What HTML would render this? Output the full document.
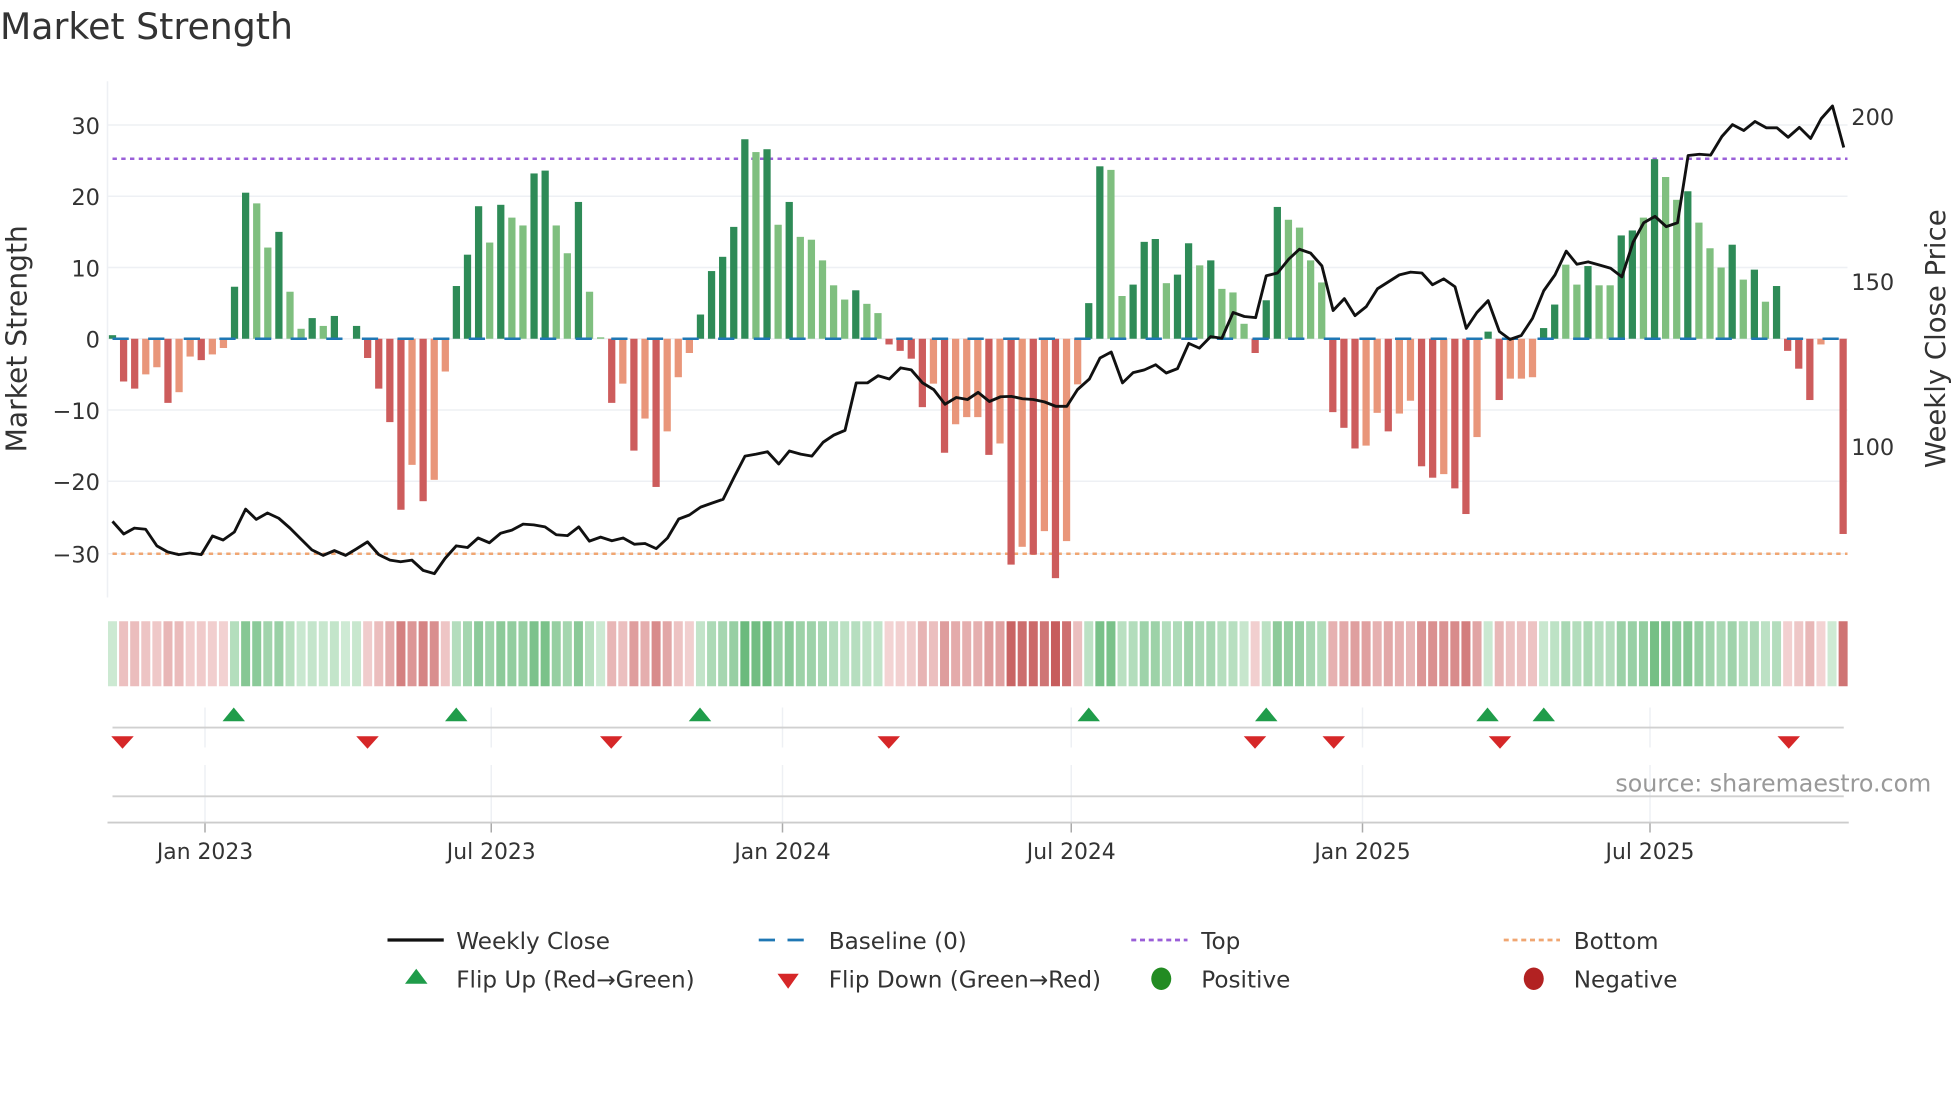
<!DOCTYPE html>
<html><head><meta charset="utf-8"><style>
html,body{margin:0;padding:0;background:#fff;width:1960px;height:1102px;overflow:hidden}
svg{display:block}
text{font-family:"DejaVu Sans","Liberation Sans",sans-serif;fill:#333}
</style></head><body>
<svg id="s" xmlns="http://www.w3.org/2000/svg" width="1960" height="1102" viewBox="0 0 1568 881.6">
<text x="0" y="31" font-size="29">Market Strength</text>
<g id="grid"></g>
<g id="bars"></g>
<g id="heat"></g>
<g id="marks"></g>
<text x="1545" y="633" font-size="19" text-anchor="end" style="fill:#999">source: sharemaestro.com</text>
<text transform="translate(21,271) rotate(-90)" font-size="22.5" text-anchor="middle">Market Strength</text>
<text transform="translate(1556,271) rotate(-90)" font-size="22" text-anchor="middle">Weekly Close Price</text>
<g font-size="18.5">
<line x1="310" y1="752" x2="355" y2="752" stroke="#111" stroke-width="2.6"/>
<text x="365" y="759">Weekly Close</text>
<line x1="607" y1="752" x2="652" y2="752" stroke="#1f77b4" stroke-width="2.2" stroke-dasharray="13,10"/>
<text x="663" y="759">Baseline (0)</text>
<line x1="905" y1="752" x2="950" y2="752" stroke="#9a5fd8" stroke-width="2.2" stroke-dasharray="4,3"/>
<text x="961" y="759">Top</text>
<line x1="1203" y1="752" x2="1248" y2="752" stroke="#f0a672" stroke-width="2.2" stroke-dasharray="4,3"/>
<text x="1259" y="759">Bottom</text>
<polygon points="333,775 342,787 324,787" fill="#1f9c4a"/>
<text x="365" y="790">Flip Up (Red→Green)</text>
<polygon points="622,779 639,779 630.5,791" fill="#d62728"/>
<text x="663" y="790">Flip Down (Green→Red)</text>
<ellipse cx="929" cy="783" rx="8" ry="9" fill="#228b22"/>
<text x="961" y="790">Positive</text>
<ellipse cx="1227" cy="783" rx="8" ry="9" fill="#b22222"/>
<text x="1259" y="790">Negative</text>
</g>
</svg>
<script>
var NS="http://www.w3.org/2000/svg";
function el(p,t,a){var e=document.createElementNS(NS,t);for(var k in a)e.setAttribute(k,a[k]);document.getElementById(p).appendChild(e);return e;}
var yt=[[30,100],[20,157],[10,214],[0,271],[-10,328],[-20,385],[-30,443]];
yt.forEach(function(t){el('grid','line',{x1:86,x2:1478,y1:t[1],y2:t[1],stroke:'#eef0f4','stroke-width':1.2});
var tx=el('grid','text',{x:80,y:t[1]+7,'font-size':18,'text-anchor':'end'});tx.textContent=(t[0]<0?'\u2212'+(-t[0]):t[0]);});
[[200,93],[150,225],[100,357]].forEach(function(t){var tx=el('grid','text',{x:1481,y:t[1]+7,'font-size':18});tx.textContent=t[0];});
el('grid','line',{x1:86,x2:86,y1:65,y2:478,stroke:'#eef0f4','stroke-width':1.2});
el('grid','line',{x1:90,x2:1478,y1:127,y2:127,stroke:'#9a5fd8','stroke-width':2,'stroke-dasharray':'3.5,3.5'});
el('grid','line',{x1:90,x2:1478,y1:443,y2:443,stroke:'#f0a672','stroke-width':2,'stroke-dasharray':'3.5,3.5'});
var D='#2e8b57',L='#7fbf7f',R='#cd5c5c',S='#e9967a';
var v=[0.5,-6,-7,-5,-4,-9,-7.5,-2.5,-3,-2.2,-1.3,7.3,20.5,19,12.8,15,6.6,1.4,2.9,1.8,3.2,0,1.8,-2.7,-7,-11.7,-24,-17.7,-22.8,-19.8,-4.6,7.4,11.8,18.6,13.5,18.8,17,15.9,23.2,23.6,15.9,12,19.2,6.6,0.2,-9,-6.3,-15.7,-11.2,-20.8,-13,-5.4,-2,3.4,9.5,11.5,15.7,28,26.2,26.6,16,19.2,14.3,13.9,11,7.5,5.5,6.8,4.9,3.6,-0.8,-1.7,-2.8,-9.6,-6.3,-16,-12,-11,-11,
-16.3,-14.7,-31.7,-29.2,-30.3,-27,-33.6,-28.4,-6.4,5,24.2,23.7,6,7.6,13.6,14,7.8,9,13.4,10.3,11,7,6.5,2.1,-2,5.4,18.5,16.7,15.6,11,7.9,-10.3,-12.5,-15.4,-15,-10.4,-13,-10.5,-8.7,-17.9,-19.5,-19,-21,-24.6,-13.8,1,-8.6,-5.6,-5.6,-5.4,1.5,4.8,10.4,7.6,10.2,7.5,7.5,14.5,15.2,17,25.2,22.7,19.5,20.7,16.3,12.7,10,13.2,8.3,9.7,5.2,7.4,-1.7,-4.2,-8.6,-0.8,0,-27.4];
var c="DRRSSRSSRSSDDLLDLLDLDDDRRRRSRSSDDDLDLLDDLLDLLRSRSRSSSDDDDDLDLDLLLLLDLLRRRRSRSSS"+
"RSRSRSRSSDDLLDDDLDDLDLLLRDDLLLLRRRSSRSSRRSRRSDRSSSDDLLDLLDDLDLLDLLLDLDLDRRRSSR";
var X=function(i){return 90+8.875*i;};
for(var i=0;i<v.length;i++){
 var col={D:D,L:L,R:R,S:S}[c[i]]||D; var h=v[i]*5.7;
 if(Math.abs(h)>0.3) el('bars','rect',{x:X(i)-2.9,y:h>0?271-h:271,width:5.8,height:Math.abs(h),fill:col});
 var a=Math.min(1,Math.abs(v[i])/34), g;
 if(v[i]>=0){g='rgb('+Math.round(206-(206-86)*a)+','+Math.round(234-(234-176)*a)+','+Math.round(212-(212-106)*a)+')';}
 else{g='rgb('+Math.round(244-(244-198)*a)+','+Math.round(214-(214-92)*a)+','+Math.round(214-(214-92)*a)+')';}
 el('heat','rect',{x:X(i)-3.6,y:497,width:7.2,height:52,fill:g});
}
el('bars','line',{x1:90,x2:1476,y1:271,y2:271,stroke:'#1f77b4','stroke-width':2,'stroke-dasharray':'13,15.5'});
var p1=[[180,1318],[198,1350],[215,1335],[233,1338],[251,1380],[268,1395],[286,1402],[304,1398],[322,1402],[340,1355],[357,1365],[375,1345],[393,1287],[410,1313],[428,1297],[446,1310],[464,1335],[481,1362],[499,1390],[517,1404],[535,1392],[553,1404],[570,1388],[588,1370],[606,1402],[624,1416],[641,1420],[659,1416],[677,1442],[695,1450],[712,1412],[730,1380],[748,1384],[765,1360],[783,1372],[801,1348],[819,1340],[837,1325],[854,1327],[872,1332],[890,1352],[908,1354],[926,1332],[943,1368],[961,1358],[979,1367],[997,1360],[1015,1376],[1032,1374],[1050,1387],[1068,1360],[1086,1312],[1103,1302],[1121,1282],[1139,1272],[1157,1262],[1175,1205],[1192,1153],[1210,1148],[1228,1142],[1246,1173],[1263,1140],[1281,1148],[1299,1153],[1317,1118],[1334,1100],[1352,1088],[1370,968],[1388,968],[1405,950],[1423,958],[1441,930],[1458,935],[1476,968],[1494,985],[1512,1022],[1530,1005],[1548,1010],[1565,992]];
var p2=[[15,1015],[33,1003],[50,1002],[68,1008],[85,1010],[103,1016],[121,1027],[139,1027],[156,985],[175,958],[192,905],[210,890],[228,968],[245,942],[263,935],[281,922],[298,943],[316,932],[334,868],[351,880],[369,851],[387,855],[405,790],[423,800],[441,803],[458,697],[476,690],[494,655],[511,630],[529,640],[547,672],[565,785],[583,755],[600,798],[618,775],[636,730],[654,712],[671,695],[689,688],[707,690],[724,720],[742,705],[760,725],[778,830],[795,790],[813,760],[831,838],[848,858],[866,848],[884,805],[902,735],[920,695],[938,635],[955,668],[973,662],[991,670],[1009,678],[1027,700],[1045,612],[1062,563],[1080,547],[1098,573],[1116,563],[1133,393],[1151,390],[1169,392],[1187,345],[1204,315],[1222,330],[1240,307],[1258,323],[1275,323],[1293,347],[1311,322],[1329,350],[1346,300],[1364,268],[1382,373]];
var pts=p1.map(function(p){return (p[0]/2).toFixed(1)+','+(p[1]/3.16).toFixed(1);}).concat(p2.map(function(p){return (784+p[0]/2).toFixed(1)+','+(p[1]/3.16).toFixed(1);}));
el('bars','polyline',{points:pts.join(' '),fill:'none',stroke:'#111','stroke-width':2.3,'stroke-linejoin':'round'});
[164,393,626,857,1090,1320].forEach(function(x,k){
 el('marks','line',{x1:x,x2:x,y1:566,y2:598,stroke:'#eef0f4','stroke-width':1.2});
 el('marks','line',{x1:x,x2:x,y1:612,y2:658,stroke:'#eef0f4','stroke-width':1.2});
 el('marks','line',{x1:x,x2:x,y1:658,y2:666,stroke:'#aaa','stroke-width':1.2});
 var t=el('marks','text',{x:x,y:687,'font-size':17.5,'text-anchor':'middle'});t.textContent=['Jan 2023','Jul 2023','Jan 2024','Jul 2024','Jan 2025','Jul 2025'][k];
});
el('marks','line',{x1:90,x2:1475,y1:582,y2:582,stroke:'#d0d0d0','stroke-width':1.5});
el('marks','line',{x1:90,x2:1475,y1:637,y2:637,stroke:'#d0d0d0','stroke-width':1.5});
el('marks','line',{x1:86,x2:1479,y1:658,y2:658,stroke:'#ccc','stroke-width':1.5});
[187,365,560,871,1013,1190,1235].forEach(function(x){el('marks','polygon',{points:(x)+',566 '+(x+9)+',577 '+(x-9)+',577',fill:'#1f9c4a'});});
[98,294,489,711,1004,1067,1200,1431].forEach(function(x){el('marks','polygon',{points:(x-9)+',589 '+(x+9)+',589 '+x+',599',fill:'#d62728'});});
</script>
</body></html>
